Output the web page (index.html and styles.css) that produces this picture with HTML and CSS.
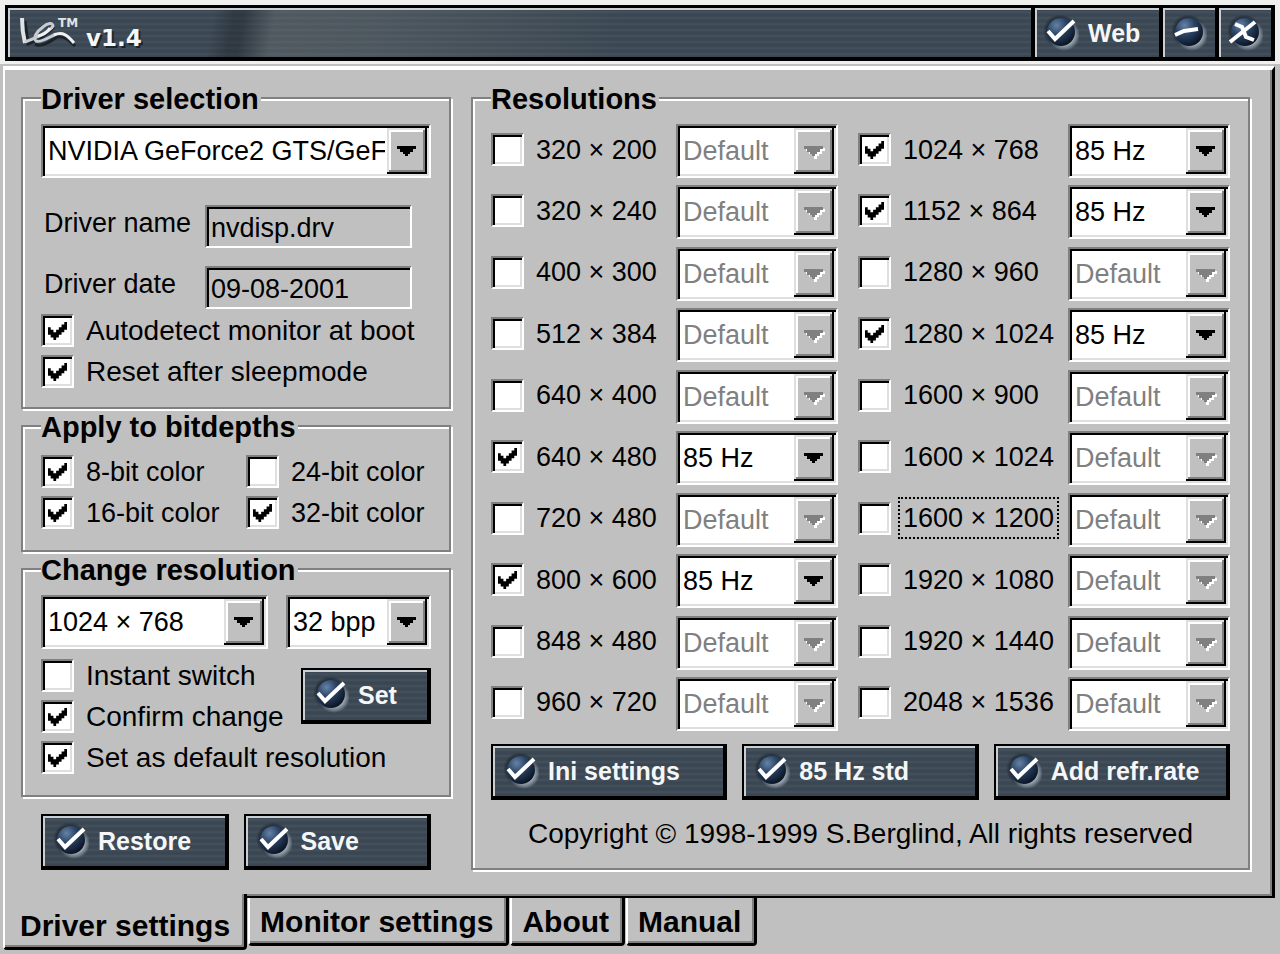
FILE: index.html
```html
<!DOCTYPE html>
<html lang="en">

<head>
    <meta charset="UTF-8">
    <meta name="viewport" content="width=device-width, initial-scale=1.0">
    <link rel="stylesheet" href="styles.css">
    <title>Driver settings</title>
</head>

<body>
    <!-- shared icons -->
    <svg class="icon-defs" aria-hidden="true">
        <defs>
            <radialGradient id="ball-fill" cx="34%" cy="26%" r="75%">
                <stop offset="0" stop-color="#6583a6" />
                <stop offset="0.45" stop-color="#2c4566" />
                <stop offset="1" stop-color="#0b1626" />
            </radialGradient>
            <radialGradient id="ball-glow" cx="50%" cy="50%" r="50%">
                <stop offset="0.6" stop-color="#a9b4bf" />
                <stop offset="1" stop-color="#a9b4bf" stop-opacity="0" />
            </radialGradient>
            <radialGradient id="ball-shade" cx="50%" cy="50%" r="50%">
                <stop offset="0.7" stop-color="#1b252f" />
                <stop offset="1" stop-color="#1b252f" stop-opacity="0" />
            </radialGradient>
        </defs>
        <symbol id="ball" viewBox="0 0 36 36">
            <circle cx="17" cy="16" r="17" fill="url(#ball-shade)" />
            <circle cx="21" cy="20" r="16" fill="url(#ball-glow)" />
            <circle cx="18" cy="17" r="14" fill="url(#ball-fill)" />
        </symbol>
        <symbol id="icon-check" viewBox="0 0 36 36">
            <use href="#ball" />
            <path d="M5 16 L12 24 L31 6" fill="none" stroke="#fff" stroke-width="4" />
        </symbol>
        <symbol id="icon-minus" viewBox="0 0 36 36">
            <use href="#ball" />
            <path d="M4 20 L13 16 L27 14" fill="none" stroke="#fff" stroke-width="4" />
        </symbol>
        <symbol id="icon-close" viewBox="0 0 36 36">
            <use href="#ball" />
            <path d="M3 27 L28 7 M8 9 L15 12 L19 22 L27 25" fill="none" stroke="#fff" stroke-width="4" />
        </symbol>
    </svg>

    <!-- title bar -->
    <header class="header">
        <div class="titlebar">
            <div class="brand">
                <svg class="logo" viewBox="0 0 62 34" role="img" aria-label="Logo">
                    <g fill="none" stroke="#1b232b" transform="translate(2 2)">
                        <path d="M3 3 L6 26 C14 23 24 18 32 9" stroke-width="3" />
                        <path d="M13 26 C18 30 28 24 35 19 C43 18 47 22 53 28" stroke-width="3" />
                    </g>
                    <path d="M2 2 C2 10 3 19 5 27" fill="none" stroke="#dfe3e6" stroke-width="4" />
                    <path d="M5 26 C13 23 29 17 33 10 C33 6 27 7 23 11 C16 16 13 22 16 25 C21 27 29 21 36 18"
                        fill="none" stroke="#c6ccd1" stroke-width="3" />
                    <path d="M18 20 C24 19 28 15 30 12 M34 19 C43 15 48 20 54 27" fill="none" stroke="#eef0f2"
                        stroke-width="3" />
                    <text x="38" y="11" class="logo-mark">TM</text>
                </svg>
                <span class="version">v1.4</span>
            </div>
            <button type="button" class="title-button">
                <svg class="icon"><use href="#icon-check" /></svg>Web
            </button>
            <button type="button" class="title-button small" aria-label="Minimize">
                <svg class="icon"><use href="#icon-minus" /></svg>
            </button>
            <button type="button" class="title-button small" aria-label="Close">
                <svg class="icon"><use href="#icon-close" /></svg>
            </button>
        </div>
    </header>

    <main class="panel">
        <div class="column">
            <!-- driver -->
            <fieldset class="group">
                <legend>Driver selection</legend>
                <select class="combo" aria-label="Driver">
                    <option>NVIDIA GeForce2 GTS/GeForce2 Pro</option>
                </select>
                <div class="fields">
                    <div class="field">
                        <label for="driverName">Driver name</label>
                        <input type="text" id="driverName" value="nvdisp.drv" readonly>
                    </div>
                    <div class="field">
                        <label for="driverDate">Driver date</label>
                        <input type="text" id="driverDate" value="09-08-2001" readonly>
                    </div>
                </div>
                <div class="checks">
                    <label class="check"><input type="checkbox" checked><span>Autodetect monitor at boot</span></label>
                    <label class="check"><input type="checkbox" checked><span>Reset after sleepmode</span></label>
                </div>
            </fieldset>

            <!-- bitdepths -->
            <fieldset class="group">
                <legend>Apply to bitdepths</legend>
                <div class="depths">
                    <label class="check"><input type="checkbox" checked><span>8-bit color</span></label>
                    <label class="check"><input type="checkbox"><span>24-bit color</span></label>
                    <label class="check"><input type="checkbox" checked><span>16-bit color</span></label>
                    <label class="check"><input type="checkbox" checked><span>32-bit color</span></label>
                </div>
            </fieldset>

            <!-- current resolution -->
            <fieldset class="group change">
                <legend>Change resolution</legend>
                <div class="current">
                    <select class="combo" aria-label="Resolution">
                        <option>1024 × 768</option>
                    </select>
                    <select class="combo" aria-label="Color depth">
                        <option>32 bpp</option>
                    </select>
                </div>
                <div class="apply">
                    <div class="checks">
                        <label class="check"><input type="checkbox"><span>Instant switch</span></label>
                        <label class="check"><input type="checkbox" checked><span>Confirm change</span></label>
                    </div>
                    <button type="button" class="button set">
                        <svg class="icon"><use href="#icon-check" /></svg>Set
                    </button>
                </div>
                <label class="check"><input type="checkbox" checked><span>Set as default resolution</span></label>
            </fieldset>

            <div class="actions main-actions">
                <button type="button" class="button"><svg class="icon"><use href="#icon-check" /></svg>Restore</button>
                <button type="button" class="button"><svg class="icon"><use href="#icon-check" /></svg>Save</button>
            </div>
        </div>

        <!-- resolutions -->
        <fieldset class="group resolutions">
            <legend>Resolutions</legend>
            <div class="modes">
                <div class="mode-list">
                    <div class="mode">
                        <label class="check"><input type="checkbox"><span>320 × 200</span></label>
                        <select class="combo" aria-label="320 × 200 rate" disabled><option>Default</option></select>
                    </div>
                    <div class="mode">
                        <label class="check"><input type="checkbox"><span>320 × 240</span></label>
                        <select class="combo" aria-label="320 × 240 rate" disabled><option>Default</option></select>
                    </div>
                    <div class="mode">
                        <label class="check"><input type="checkbox"><span>400 × 300</span></label>
                        <select class="combo" aria-label="400 × 300 rate" disabled><option>Default</option></select>
                    </div>
                    <div class="mode">
                        <label class="check"><input type="checkbox"><span>512 × 384</span></label>
                        <select class="combo" aria-label="512 × 384 rate" disabled><option>Default</option></select>
                    </div>
                    <div class="mode">
                        <label class="check"><input type="checkbox"><span>640 × 400</span></label>
                        <select class="combo" aria-label="640 × 400 rate" disabled><option>Default</option></select>
                    </div>
                    <div class="mode">
                        <label class="check"><input type="checkbox" checked><span>640 × 480</span></label>
                        <select class="combo" aria-label="640 × 480 rate"><option>85 Hz</option></select>
                    </div>
                    <div class="mode">
                        <label class="check"><input type="checkbox"><span>720 × 480</span></label>
                        <select class="combo" aria-label="720 × 480 rate" disabled><option>Default</option></select>
                    </div>
                    <div class="mode">
                        <label class="check"><input type="checkbox" checked><span>800 × 600</span></label>
                        <select class="combo" aria-label="800 × 600 rate"><option>85 Hz</option></select>
                    </div>
                    <div class="mode">
                        <label class="check"><input type="checkbox"><span>848 × 480</span></label>
                        <select class="combo" aria-label="848 × 480 rate" disabled><option>Default</option></select>
                    </div>
                    <div class="mode">
                        <label class="check"><input type="checkbox"><span>960 × 720</span></label>
                        <select class="combo" aria-label="960 × 720 rate" disabled><option>Default</option></select>
                    </div>
                </div>
                <div class="mode-list">
                    <div class="mode">
                        <label class="check"><input type="checkbox" checked><span>1024 × 768</span></label>
                        <select class="combo" aria-label="1024 × 768 rate"><option>85 Hz</option></select>
                    </div>
                    <div class="mode">
                        <label class="check"><input type="checkbox" checked><span>1152 × 864</span></label>
                        <select class="combo" aria-label="1152 × 864 rate"><option>85 Hz</option></select>
                    </div>
                    <div class="mode">
                        <label class="check"><input type="checkbox"><span>1280 × 960</span></label>
                        <select class="combo" aria-label="1280 × 960 rate" disabled><option>Default</option></select>
                    </div>
                    <div class="mode">
                        <label class="check"><input type="checkbox" checked><span>1280 × 1024</span></label>
                        <select class="combo" aria-label="1280 × 1024 rate"><option>85 Hz</option></select>
                    </div>
                    <div class="mode">
                        <label class="check"><input type="checkbox"><span>1600 × 900</span></label>
                        <select class="combo" aria-label="1600 × 900 rate" disabled><option>Default</option></select>
                    </div>
                    <div class="mode">
                        <label class="check"><input type="checkbox"><span>1600 × 1024</span></label>
                        <select class="combo" aria-label="1600 × 1024 rate" disabled><option>Default</option></select>
                    </div>
                    <div class="mode">
                        <label class="check focused"><input type="checkbox"><span>1600 × 1200</span></label>
                        <select class="combo" aria-label="1600 × 1200 rate" disabled><option>Default</option></select>
                    </div>
                    <div class="mode">
                        <label class="check"><input type="checkbox"><span>1920 × 1080</span></label>
                        <select class="combo" aria-label="1920 × 1080 rate" disabled><option>Default</option></select>
                    </div>
                    <div class="mode">
                        <label class="check"><input type="checkbox"><span>1920 × 1440</span></label>
                        <select class="combo" aria-label="1920 × 1440 rate" disabled><option>Default</option></select>
                    </div>
                    <div class="mode">
                        <label class="check"><input type="checkbox"><span>2048 × 1536</span></label>
                        <select class="combo" aria-label="2048 × 1536 rate" disabled><option>Default</option></select>
                    </div>
                </div>
            </div>
            <div class="actions">
                <button type="button" class="button"><svg class="icon"><use href="#icon-check" /></svg>Ini settings</button>
                <button type="button" class="button"><svg class="icon"><use href="#icon-check" /></svg>85 Hz std</button>
                <button type="button" class="button"><svg class="icon"><use href="#icon-check" /></svg>Add refr.rate</button>
            </div>
            <p class="copyright">Copyright © 1998-1999 S.Berglind, All rights reserved</p>
        </fieldset>
    </main>

    <!-- tabs under the panel -->
    <nav class="tabs">
        <a href="#" class="tab active">Driver settings</a>
        <a href="#" class="tab">Monitor settings</a>
        <a href="#" class="tab">About</a>
        <a href="#" class="tab">Manual</a>
    </nav>
</body>

</html>
```
FILE: styles.css
```css
* {
    box-sizing: border-box;
}

body {
    margin: 0;
    background-color: #c0c0c0;
    color: #000;
    font-family: "Liberation Sans", Arial, sans-serif;
    font-size: 28px;
    line-height: 32px;
}

button,
input,
select {
    font: inherit;
    color: inherit;
    margin: 0;
}

.icon-defs {
    display: block;
    width: 0;
    height: 0;
}

.icon {
    width: 36px;
    height: 36px;
    flex: none;
}

/* title bar */
.header {
    padding: 5px 5px 3px;
    background-color: #efefef;
    border-bottom: 2px solid #c0c0c0;
}

.titlebar {
    display: flex;
    height: 56px;
    border: solid #000;
    border-width: 3px 0 0 3px;
}

.brand,
.title-button,
.button {
    display: flex;
    align-items: center;
    border: 0 solid #000;
    color: #f4f6f8;
    background: repeating-linear-gradient(#3a4651 0, #3a4651 2px, #45515c 4px, #3a4651 6px);
    box-shadow: inset 2px 2px #c9ced3;
}

.brand {
    flex: 1;
    gap: 4px;
    padding-left: 12px;
    border-width: 0 4px 4px 0;
    background:
        linear-gradient(100deg, rgba(0, 0, 0, 0) 20%, rgba(30, 36, 42, 0.4) 22%, rgba(30, 36, 42, 0.4) 23%, rgba(120, 124, 124, 0.35) 26%, rgba(120, 124, 124, 0.3) 36%, rgba(120, 124, 124, 0) 60%),
        repeating-linear-gradient(#3a4651 0, #3a4651 2px, #45515c 4px, #3a4651 6px);
}

.logo {
    width: 62px;
    height: 34px;
    overflow: visible;
}

.logo-mark {
    font: bold 12px "DejaVu Sans", sans-serif;
    fill: #dfe3e6;
}

.version {
    padding-top: 10px;
    font: bold 23px "DejaVu Sans", Verdana, sans-serif;
    text-shadow: 2px 2px #1b232b;
}

.title-button,
.button {
    gap: 9px;
    font-size: 25px;
    font-weight: bold;
    white-space: nowrap;
    cursor: pointer;
}

.title-button {
    width: 128px;
    padding: 0 0 0 8px;
    border-width: 0 4px 4px 0;
}

.title-button.small {
    width: 56px;
    padding: 0;
    justify-content: center;
}

.button {
    height: 56px;
    padding: 0 0 0 10px;
    border-width: 2px 4px 4px 2px;
}

/* panel */
.panel {
    display: grid;
    grid-template-columns: 430fr 779fr;
    gap: 20px;
    margin: 0 5px 0 3px;
    padding: 16px 22px 26px 16px;
    border: solid #fff;
    border-width: 4px 3px 2px 2px;
    border-right-color: #000;
    border-bottom-color: #000;
    box-shadow: inset -2px -2px #808080;
}

.column {
    display: flex;
    flex-direction: column;
    gap: 5px;
    min-width: 0;
}

.group {
    min-width: 0;
    margin: 0;
    padding: 14px 18px 19px;
    border: 2px solid #808080;
    box-shadow: 2px 2px #fff, inset 2px 2px #fff;
}

.group legend {
    padding: 2px 2px 0 0;
    background-color: #c0c0c0;
    font-size: 29px;
    font-weight: bold;
    line-height: 22px;
}

/* drop-downs */
.combo {
    display: block;
    width: 100%;
    height: 54px;
    padding: 0 44px 0 5px;
    border: 2px solid;
    border-color: #808080 #fff #fff #808080;
    border-radius: 0;
    appearance: none;
    font-size: 27px;
    background: #fff url("data:image/svg+xml,%3Csvg xmlns='http://www.w3.org/2000/svg' width='40' height='46'%3E%3Cpath fill='%23000' d='M0 0h40v46H0z'/%3E%3Cpath fill='%23dfdfdf' d='M0 0h38v44H0z'/%3E%3Cpath fill='%23808080' d='M2 2h36v42H2z'/%3E%3Cpath fill='%23fff' d='M2 2h34v40H2z'/%3E%3Cpath fill='%23c0c0c0' d='M4 4h32v38H4z'/%3E%3Cpath d='M10 18h19v3h-3v3h-3v2h-2v2h-3v-2h-2v-2h-3v-3h-3z'/%3E%3C/svg%3E") no-repeat right 2px top 2px;
    box-shadow: inset 2px 2px #000, inset -2px -2px #dfdfdf;
}

.combo:disabled {
    color: #808080;
    opacity: 1;
    background-image: url("data:image/svg+xml,%3Csvg xmlns='http://www.w3.org/2000/svg' width='40' height='46'%3E%3Cpath fill='%23000' d='M0 0h40v46H0z'/%3E%3Cpath fill='%23dfdfdf' d='M0 0h38v44H0z'/%3E%3Cpath fill='%23808080' d='M2 2h36v42H2z'/%3E%3Cpath fill='%23fff' d='M2 2h34v40H2z'/%3E%3Cpath fill='%23c0c0c0' d='M4 4h32v38H4z'/%3E%3Cpath fill='%23fff' transform='translate(2 2)' d='M10 18h19v3h-3v3h-3v2h-2v3h-3v-3h-2v-2h-3v-3h-3z'/%3E%3Cpath fill='%23c0c0c0' d='M10 20h2v3h3v3h2v3h-7z'/%3E%3Cpath fill='%23808080' d='M10 18h19v3h-3v3h-3v2h-2v2h-3v-2h-2v-2h-3v-3h-3z'/%3E%3C/svg%3E");
}

/* read-only fields */
.fields {
    display: flex;
    flex-direction: column;
    gap: 18px;
    margin: 27px 19px 5px 3px;
}

.field {
    display: flex;
    justify-content: space-between;
    font-size: 27px;
}

.field label {
    padding-top: 2px;
}

.field input {
    width: 207px;
    height: 43px;
    padding: 4px 4px 0;
    border: 2px solid;
    border-color: #808080 #fff #fff #808080;
    background-color: #c0c0c0;
    box-shadow: inset 2px 2px #000;
}

/* check boxes */
.checks {
    display: flex;
    flex-direction: column;
    gap: 8px;
}

.check {
    display: flex;
    align-items: center;
    gap: 12px;
    height: 33px;
    white-space: nowrap;
}

.check input {
    width: 33px;
    height: 33px;
    flex: none;
    appearance: none;
    border: 2px solid;
    border-color: #808080 #fff #fff #808080;
    background: #fff no-repeat 5px 6px;
    box-shadow: inset 2px 2px #000, inset -2px -2px #dfdfdf;
}

.check input:checked {
    background-image: url("data:image/svg+xml,%3Csvg xmlns='http://www.w3.org/2000/svg' width='19' height='18' viewBox='0 0 7 7' preserveAspectRatio='none'%3E%3Cpath d='M0 2h1v1h1v1h1v-1h1v-1h1v-1h1v-1h1v3h-1v1h-1v1h-1v1h-1v1h-1v-1h-1v-1h-1z'/%3E%3C/svg%3E");
}

.check.focused span {
    outline: 2px dotted #000;
    outline-offset: 3px;
}

.depths {
    display: grid;
    grid-template-columns: 1fr 1fr;
    gap: 8px 20px;
    padding: 3px 0 2px;
    font-size: 27px;
}

/* change resolution */
.change {
    padding-bottom: 21px;
}

.current {
    display: grid;
    grid-template-columns: 227fr 145fr;
    gap: 18px;
    margin-bottom: 10px;
}

.apply {
    display: flex;
    align-items: center;
    justify-content: space-between;
    margin-bottom: 8px;
}

.set {
    width: 130px;
}

/* button rows */
.actions {
    display: flex;
    gap: 15px;
}

.actions .button {
    flex: 1;
}

.main-actions {
    padding: 12px 20px 0;
}

/* resolutions */
.resolutions {
    display: flex;
    flex-direction: column;
    padding-bottom: 18px;
}

.modes {
    flex: 1;
    display: grid;
    grid-template-columns: 347fr 372fr;
    gap: 20px;
    margin-bottom: 13px;
    font-size: 27px;
}

.mode-list {
    display: flex;
    flex-direction: column;
    justify-content: space-between;
}

.mode {
    display: flex;
    align-items: center;
    justify-content: space-between;
}

.mode .check {
    margin-bottom: 3px;
}

.mode .combo {
    width: 162px;
}

.copyright {
    margin: 18px 0 0;
    text-align: center;
}

/* tabs */
.tabs {
    display: flex;
    align-items: flex-start;
    padding-left: 3px;
}

.tab {
    height: 48px;
    margin-right: 1px;
    padding: 8px 13px 0 10px;
    border: solid #000;
    border-width: 0 3px 3px 2px;
    border-left-color: #fff;
    border-radius: 0 0 4px 4px;
    box-shadow: inset -2px -2px #808080;
    color: #000;
    font-size: 30px;
    font-weight: bold;
    text-decoration: none;
}

.tab.active {
    height: 56px;
    margin-top: -4px;
    padding: 16px 14px 0 15px;
    background-color: #c0c0c0;
}
```
